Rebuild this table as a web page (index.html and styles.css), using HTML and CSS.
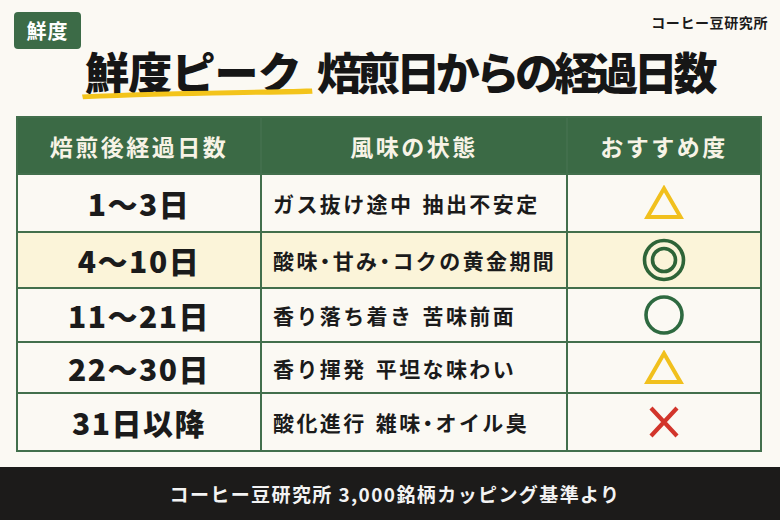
FILE: index.html
```html
<!DOCTYPE html>
<html lang="ja">
<head>
<meta charset="utf-8">
<title>鮮度ピーク</title>
<link rel="stylesheet" href="styles.css">
</head>
<body>
<div class="page">
  <div class="topbar">
    <span class="badge">鮮度</span>
    <span class="brand">コーヒー豆研究所</span>
  </div>
  <h1 class="title"><span class="t1">鮮度ピーク<svg class="brush" viewBox="0 0 232 14" preserveAspectRatio="none"><path d="M1 8 C40 6 90 4.5 150 3.4 C185 2.8 212 2 231 1.6 L231.5 7.2 C208 8 180 8.4 150 8.8 C100 9.6 45 11 2 13.2 Z" fill="#f3c41b"/></svg></span><span class="t2">焙煎日からの経過日数</span></h1>

  <div class="table">
    <div class="th">焙煎後経過日数</div>
    <div class="th">風味の状態</div>
    <div class="th">おすすめ度</div>

    <div class="td days">1～3日</div>
    <div class="td desc">ガス抜け途中 抽出不安定</div>
    <div class="td mark"><svg width="40" height="36" viewBox="0 0 40 36"><polygon points="20,3.5 3.5,32 36.5,32" fill="none" stroke="#f1c01d" stroke-width="4"/></svg></div>

    <div class="td days hl">4～10日</div>
    <div class="td desc hl">酸味<span class="dot">・</span>甘み<span class="dot">・</span>コクの黄金期間</div>
    <div class="td mark hl"><svg width="46" height="46" viewBox="0 0 46 46"><circle cx="23" cy="23" r="19.5" fill="none" stroke="#2e6438" stroke-width="3.6"/><circle cx="23" cy="23" r="11.5" fill="none" stroke="#2e6438" stroke-width="3.6"/></svg></div>

    <div class="td days">11～21日</div>
    <div class="td desc">香り落ち着き 苦味前面</div>
    <div class="td mark"><svg width="42" height="42" viewBox="0 0 42 42"><circle cx="21" cy="21" r="18" fill="none" stroke="#2e6a40" stroke-width="3.6"/></svg></div>

    <div class="td days">22～30日</div>
    <div class="td desc">香り揮発 平坦な味わい</div>
    <div class="td mark"><svg width="40" height="36" viewBox="0 0 40 36"><polygon points="20,3.5 3.5,32 36.5,32" fill="none" stroke="#f1c01d" stroke-width="4"/></svg></div>

    <div class="td days">31日以降</div>
    <div class="td desc">酸化進行 雑味<span class="dot">・</span>オイル臭</div>
    <div class="td mark"><svg width="32" height="32" viewBox="0 0 32 32"><path d="M3 2 L29 30 M29 2 L3 30" stroke="#d2352b" stroke-width="4.2" fill="none"/></svg></div>
  </div>

  <footer class="footer">コーヒー豆研究所 3,000銘柄カッピング基準より</footer>
</div>
</body>
</html>
```

FILE: styles.css
```css
* { box-sizing: border-box; }
html, body { margin: 0; padding: 0; }
body {
  background: #fbf9f3;
  font-family: "Noto Sans CJK JP", "Noto Sans", sans-serif;
  color: #1b1b1b;
}
.page {
  width: 780px;
  height: 520px;
  display: flex;
  flex-direction: column;
  overflow: hidden;
}
.topbar {
  display: flex;
  justify-content: space-between;
  align-items: flex-start;
  padding: 12px 12px 0 14px;
}
.badge {
  width: 67px;
  height: 37px;
  background: #3c6b47;
  color: #fff;
  border-radius: 4px;
  font-size: 20px;
  font-weight: 700;
  line-height: 37px;
  text-align: center;
  letter-spacing: 1px;
}
.brand {
  font-size: 14px;
  font-weight: 700;
  letter-spacing: 0.6px;
  line-height: 18px;
  margin-top: 1px;
}
.title {
  margin: -2px 0 0 0;
  padding-left: 85px;
  font-size: 44px;
  font-weight: 900;
  line-height: 48px;
  white-space: nowrap;
  color: #161616;
}
.t1 {
  position: relative;
  letter-spacing: -0.8px;
  margin-right: 16px;
}
.t2 {
  letter-spacing: -4.4px;
}
.brush {
  position: absolute;
  left: -4px;
  top: 48px;
  width: 232px;
  height: 13px;
}
.table {
  margin: 21px 0 0 16px;
  width: 746px;
  display: grid;
  grid-template-columns: 242px 304px 192px;
  grid-template-rows: 55px 56px 54px 52px 49px 56px;
  gap: 2px;
  padding: 2px;
  background: #426f4c;
}
.th {
  background: #3b6a45;
  color: #f7f3e6;
  font-size: 23px;
  font-weight: 700;
  letter-spacing: 2.5px;
  display: flex;
  align-items: center;
  justify-content: center;
}
.td {
  background: #fbf9f3;
  display: flex;
  align-items: center;
}
.td.hl { background: #fbf4d9; }
.days {
  justify-content: center;
  font-size: 30px;
  font-weight: 800;
  letter-spacing: 1.5px;
}
.desc {
  padding-left: 11px;
  font-size: 21px;
  font-weight: 700;
  letter-spacing: 2.4px;
  word-spacing: 2px;
  white-space: pre;
}
.dot {
  font-feature-settings: "palt";
}
.mark { justify-content: center; }
.mark svg { display: block; }
.footer {
  margin-top: auto;
  height: 53px;
  background: #1c1b1a;
  color: #f3f3f3;
  font-size: 19px;
  font-weight: 700;
  letter-spacing: 1.4px;
  display: flex;
  align-items: center;
  justify-content: center;
  padding-left: 10px;
}
```
